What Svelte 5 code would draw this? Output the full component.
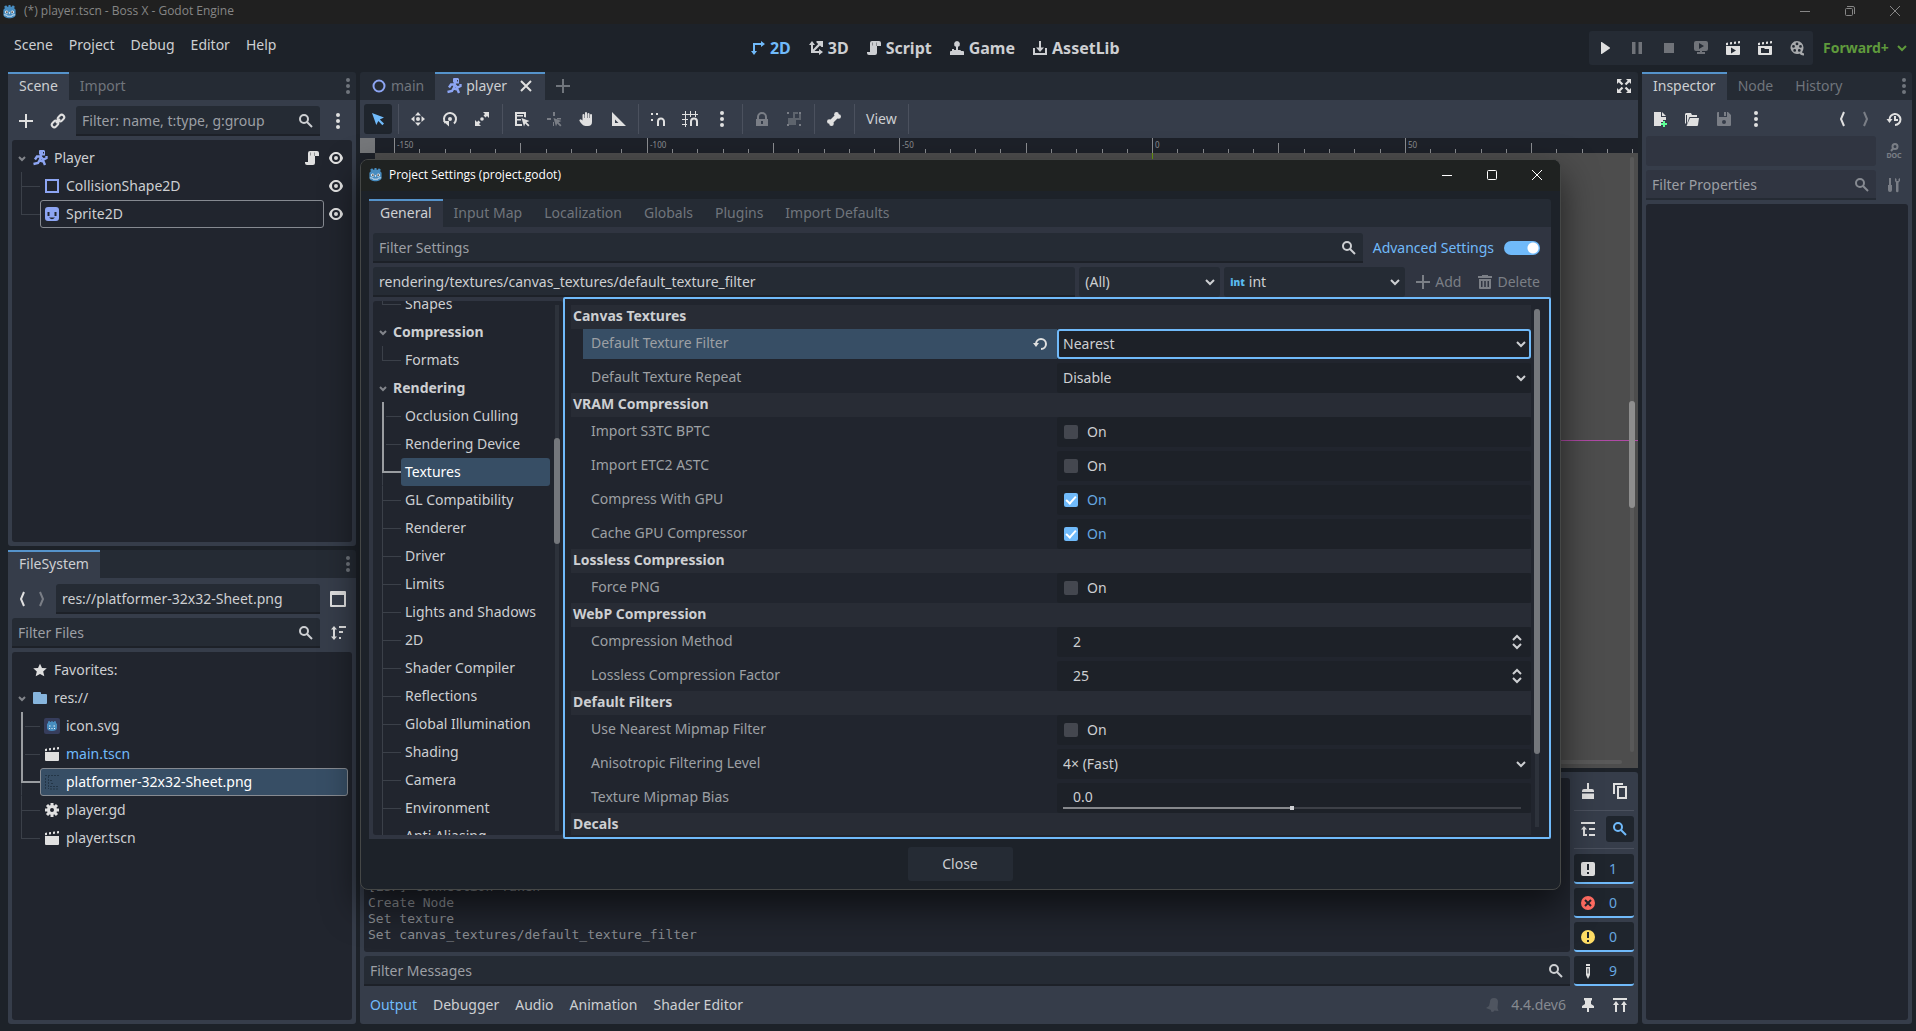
<script>
const icons = {
  godot:
    '<path fill="#478cbf" d="M1.5 6 3 4.6l-.6-1.9 2-1.3 1.3 1.5h1L7 1h2l.3 1.9h1l1.3-1.5 2 1.3-.6 1.9L14.5 6v5.5c0 2.3-3 3.7-6.5 3.7s-6.5-1.4-6.5-3.7z"/><circle fill="#fff" cx="5" cy="8.5" r="1.7"/><circle fill="#fff" cx="11" cy="8.5" r="1.7"/><circle fill="#414042" cx="5.2" cy="8.6" r="1"/><circle fill="#414042" cx="10.8" cy="8.6" r="1"/><path fill="none" stroke="#d5e4f2" d="M8 8.5v2M2 11.5l3 .3.5 1.2h5l.5-1.2 3-.3"/>',
  add: '<path d="M7 1v6H1v2h6v6h2V9h6V7H9V1z"/>',
  close: '<path fill="none" stroke="currentColor" stroke-width="2" d="m3 3 10 10M13 3 3 13"/>',
  link: '<g fill="none" stroke="currentColor" stroke-width="2"><rect x="7.5" y="2.5" width="7" height="5" rx="2.5" transform="rotate(-45 11 5)"/><rect x="1.5" y="8.5" width="7" height="5" rx="2.5" transform="rotate(-45 5 11)"/><path d="m6 10 4-4"/></g>',
  search: '<g fill="none" stroke="currentColor" stroke-width="2"><circle cx="6" cy="6" r="4"/><path d="m9 9 5 5"/></g>',
  dots: '<circle cx="8" cy="2" r="2"/><circle cx="8" cy="8" r="2"/><circle cx="8" cy="14" r="2"/>',
  body: '<path fill-rule="evenodd" d="M7.5 0H12l1 1v4.5H8.5L7 4V1zM11 2v1.5h1V2z"/><path fill="none" stroke="currentColor" stroke-width="2.4" d="M9 5 8 10M8.5 6.5H5L3 9.5M9 7l2.5 2.500 3-1.500V6M8 9.500 6 13l-4.500 1M8 10.500l3.500 1L13 15"/>',
  circle: '<circle fill="none" stroke="currentColor" stroke-width="2" cx="8" cy="8" r="5.5"/>',
  square: '<path fill="none" stroke="currentColor" stroke-width="2" d="M2 2h12v12H2z"/>',
  sprite: '<path fill-rule="evenodd" d="M4 1h8a3 3 0 0 1 3 3v8a3 3 0 0 1-3 3H4a3 3 0 0 1-3-3V4a3 3 0 0 1 3-3zm-.5 5v4h2V6zm7 0v4h2V6zM5 11.500q3 3.500 6 0z"/>',
  script: '<path d="M6 1a2 2 0 0 0-2 2v9H1v1a2 2 0 0 0 2 2h6a2 2 0 0 0 2-2V6h4V3a2 2 0 0 0-2-2z"/><path fill="none" stroke="#1d2229" stroke-opacity=".4" d="M6.500 2.500v3M10.500 6V2.500"/>',
  eye: '<path d="M8 2C5.443 2 2.209 3.948 1.045 7.705a1 1 0 0 0-.01.567C2.163 12.211 5.5 14 8 14s5.836-1.789 6.965-5.728a1 1 0 0 0 0-.552C13.862 3.966 10.57 2 8 2zm0 2a4 4 0 0 1 0 8 4 4 0 0 1 0-8zm0 2a2 2 0 0 0 0 4 2 2 0 0 0 0-4z"/>',
  down: '<path fill="none" stroke="currentColor" stroke-width="2" d="m4 6 4 4 4-4"/>',
  fold: '<path fill="none" stroke="currentColor" stroke-width="2" d="m5 7 3 3 3-3"/>',
  updown: '<path fill="none" stroke="currentColor" stroke-width="2" d="m4 6 4-4 4 4M4 10l4 4 4-4"/>',
  back: '<path fill="none" stroke="currentColor" stroke-width="2" d="M10 1 7 8l3 7"/>',
  forward: '<path fill="none" stroke="currentColor" stroke-width="2" d="m6 1 3 7-3 7"/>',
  window: '<path fill-rule="evenodd" d="M0 1a1 1 0 0 1 1-1h14a1 1 0 0 1 1 1v14a1 1 0 0 1-1 1H1a1 1 0 0 1-1-1zm2 3v10h12V4z"/>',
  sort: '<path d="m4 1 3 3.5H5v7h2L4 15l-3-3.5h2v-7H1zM9 1h7v2H9zm0 5h4v2H9zm0 6h2v2H9z"/>',
  star: '<path d="M8 1.7 6 6l-4.8.2 3.6 3.4-1.1 4.6L8 11.9l4.3 2.3-1.1-4.6 3.6-3.4L10 6z"/>',
  folder: '<path d="M2 2a1 1 0 0 0-1 1v10a1 1 0 0 0 1 1h12a1 1 0 0 0 1-1V5a1 1 0 0 0-1-1H9V3a1 1 0 0 0-1-1z"/>',
  iconsvg: '<rect width="16" height="16" rx="2" fill="#363d5c"/><path fill="#478cbf" d="m3 6 1-1V3.5L5.500 3l.8 1h.9l.3-1h1l.3 1h.9l.8-1 1.500.5V5l1 1v4c0 2-2.200 3-5 3s-5-1-5-3z"/><path stroke="#e8f1fa" fill="none" d="M5 8h1.500M9.500 8H11M5 10.500h1m1.500 0h1m1.500 0h1"/>',
  scene: '<path d="M1 6h14v8a1 1 0 0 1-1 1H2a1 1 0 0 1-1-1zM1 3l2-.4V5l-2 .3zm4-.7 2-.3v2.3l-2 .3zm4-.6 2-.2v2.3l-2 .3zm4-.4 2-.3v2.3l-2 .3z"/>',
  sheet: '<path stroke="#243647" fill="none" stroke-dasharray="2 1" d="M1 1.5h14M1.500 4v11M4.500 2v13M6 6.500h3M7 9.500h2M6 12.500h9M6 15h8"/>',
  gear: '<circle fill="none" stroke="currentColor" stroke-width="3" cx="8" cy="8" r="3.5"/><path fill="none" stroke="currentColor" stroke-width="3" d="M8 1v3M8 12v3M1 8h3M12 8h3M3 3l2.200 2.200M10.800 10.800 13 13M13 3l-2.200 2.200M5.200 10.800 3 13"/>',
  axes2d: '<path d="M3 3h8V1l4 3-4 3V5H5v6h2l-3 4-3-4h2z"/>',
  axes3d: '<path d="m4 1 3 4H5v4.6L10.200 4 8.500 2.500V1H15v6h-1.500L12 5.500 6.500 11H11V9l4 3-4 3v-2H3V5H1z"/>',
  joystick: '<path d="M8 1a3 3 0 0 1 1 5.800V10h2a1 1 0 0 1 1 1h2a1 1 0 0 1 1 1v3H1v-3a1 1 0 0 1 1-1h1V9h2v1h2V6.800A3 3 0 0 1 8 1z"/>',
  download: '<path d="M7 1h2v6.500h3L8 12 4 7.500h3zM1 8h2v5h10V8h2v7H1z"/>',
  play: '<path d="M4 2.500v11a.5.5 0 0 0 .8.4l8-5.500a.5.5 0 0 0 0-.8l-8-5.500a.5.5 0 0 0-.8.4z"/>',
  pause: '<path d="M3 2h3.500v12H3zm6.500 0H13v12H9.500z"/>',
  stop: '<path d="M3 3h10v10H3z"/>',
  remote: '<path fill-rule="evenodd" d="M3 1h10a2 2 0 0 1 2 2v6a2 2 0 0 1-2 2H9v1h3v2H4v-2h3v-1H3a2 2 0 0 1-2-2V3a2 2 0 0 1 2-2zm3 2v6l5-3z"/>',
  playScene: '<path fill-rule="evenodd" d="M1 6h14v8a1 1 0 0 1-1 1H2a1 1 0 0 1-1-1zm5 1.500v6l5-3zM1 3l2-.4V5l-2 .3zm4-.7 2-.3v2.300l-2 .3zm4-.6 2-.2v2.300l-2 .3zm4-.4 2-.3v2.300l-2 .3z"/>',
  playCustom: '<path fill-rule="evenodd" d="M1 6h14v8a1 1 0 0 1-1 1H2a1 1 0 0 1-1-1zm3 2v5h8V9H8L7 8zM1 3l2-.4V5l-2 .3zm4-.7 2-.3v2.300l-2 .3zm4-.6 2-.2v2.300l-2 .3zm4-.4 2-.3v2.300l-2 .3z"/>',
  movie: '<path fill-rule="evenodd" d="M8 1a6.500 6.500 0 0 1 6.500 6.500c0 3-1.500 4-1.500 5l2 1v2c-3 0-4-1.500-4.500-2A6.500 6.500 0 1 1 8 1zm0 1.500a1.400 1.400 0 0 0 0 2.800 1.400 1.400 0 0 0 0-2.800zM4.500 5a1.400 1.400 0 0 0 0 2.800A1.400 1.400 0 0 0 4.500 5zm7 0a1.400 1.400 0 0 0 0 2.800 1.400 1.400 0 0 0 0-2.800zM5.700 9a1.400 1.400 0 0 0 0 2.800 1.400 1.400 0 0 0 0-2.800zm4.600 0a1.400 1.400 0 0 0 0 2.800 1.400 1.400 0 0 0 0-2.800z"/>',
  expand: '<path d="M1 1h5L4.300 2.700l3 3-1.600 1.600-3-3L1 6zM15 1v5l-1.700-1.700-3 3-1.600-1.600 3-3L10 1zM1 15v-5l1.700 1.700 3-3 1.600 1.600-3 3L6 15zM15 15h-5l1.700-1.700-3-3 1.600-1.600 3 3L15 10z"/>',
  select: '<path d="m2 2 12 4.500-4.200 2 4.200 4.100-1.600 1.600-4.100-4.200-2 4z"/>',
  move: '<path d="M8 1 5 4.500h6zM8 15l-3-3.500h6zM1 8l3.500-3v6zM15 8l-3.500-3v6z"/><circle cx="8" cy="8" r="2"/>',
  rotate: '<path fill="none" stroke="currentColor" stroke-width="2" d="M3.500 12A6 6 0 1 1 12 12.500"/><path d="M1 10h6v5.500z"/><circle cx="8" cy="8" r="2"/>',
  scale: '<path d="M9 1h6v6l-2-2-1.500 1.500-2-2L11 3zM7 15H1V9l2 2 1.500-1.500 2 2L5 13z"/><circle cx="8" cy="8" r="1.800"/>',
  listSelect: '<path d="M1 1h11v5.500L10 6V3H3v1h6v1.500H3V8h4v1.500H3V13h5v2H1z"/><path d="m7.500 7 8 3-3 1.200 3 3-1.300 1.300-3-3L10 15.500z"/>',
  pivot: '<path d="M7 1h2v4H7zM1 7h4v2H1zm10 0h4v1.500h-4zM7 11v4h1v-4z"/><path d="m7.500 7 8 3-3 1.200 3 3-1.300 1.300-3-3L10 15.500z"/>',
  pan: '<path d="M7 2a1 1 0 0 1 2 0v5h.5V3a1 1 0 0 1 2 0v4h.5V4a1 1 0 0 1 2 0v7a4 4 0 0 1-4 4H7.500C5 15 3 12 1.500 10a1.200 1.200 0 0 1 2-1.300L4.500 9.500V4a1 1 0 0 1 2 0v3H7z"/>',
  ruler: '<path fill-rule="evenodd" d="M2 1v14h14zm3 7.500L8.500 12H5z"/>',
  smartSnap: '<path d="M1 2h2v2H1zm5 0h2v2H6zM1 8h2v2H1z"/><path fill="none" stroke="currentColor" stroke-width="2" d="M8 15v-4.500a3 3 0 0 1 6 0V15"/>',
  gridSnap: '<path d="M3 0h1v16H3zM8 0h1v6H8zM13 0h1v6h-1zM0 3h16v1H0zM0 8h6v1H0zM0 13h5v1H0z"/><path fill="none" stroke="currentColor" stroke-width="2" d="M9 15v-4.500a3 3 0 0 1 6 0V15"/>',
  lock: '<path fill-rule="evenodd" d="M8 1a5 5 0 0 0-5 5v2H2v7h12V8h-1V6a5 5 0 0 0-5-5zm0 2a3 3 0 0 1 3 3v2H5V6a3 3 0 0 1 3-3zM7 10h2v3H7z"/>',
  group: '<path d="M1 1h2v2H1zm12 0h2v2h-2zM1 13h2v2H1zm12 0h2v2h-2z"/><path opacity=".6" fill-rule="evenodd" d="M7 1h5v2h3v6h-5v5H2V7h5zm2 2v4h4V3z"/>',
  bone: '<path fill="none" stroke="currentColor" stroke-width="4" d="m5 11 6-6"/><circle cx="10.500" cy="3.300" r="2.300"/><circle cx="12.700" cy="5.500" r="2.300"/><circle cx="3.300" cy="10.500" r="2.300"/><circle cx="5.500" cy="12.700" r="2.300"/>',
  fileNew: '<path d="M2 1v14h7v-4h2V9h3V6H9V1zm8 0v4h4z"/><path fill="#5fff97" d="M11 10h2v2h2v2h-2v2h-2v-2H9v-2h2z"/>',
  open: '<path fill-rule="evenodd" d="M2 2h5l1 2h5v2H6a1 1 0 0 0-1 1L3 13V4H2v9L1 12V3zM6 7h9l-1 7a1 1 0 0 1-1 1H2.500z"/>',
  save: '<path fill-rule="evenodd" d="M1 2a1 1 0 0 1 1-1h1v5h8V1h1l3 3v10a1 1 0 0 1-1 1H2a1 1 0 0 1-1-1zm7 7a2 2 0 0 0 0 4 2 2 0 0 0 0-4zM8 1h2v4H8z"/>',
  history: '<path fill="none" stroke="currentColor" stroke-width="2" d="M3.500 9a5.500 5.500 0 1 1 5.500 5M9 5v4h3"/><path d="M.5 8h6l-3 4z"/>',
  doc: '<circle fill="none" stroke="currentColor" stroke-width="2" cx="9" cy="3.500" r="2.500"/><path stroke="currentColor" stroke-width="2" d="M7.500 5 5 8"/><text x="8" y="15" font-size="7" font-weight="700" text-anchor="middle">DOC</text>',
  tools: '<path d="M3 1h2v7h1v5a2 2 0 0 1-4 0V8h1zM9 1v3l1 1.500V14a1 1 0 0 0 2.500 0V5.500L14 4V1l-1.500 1v2h-2V2z"/>',
  revert: '<path fill="none" stroke="currentColor" stroke-width="2" d="M4 9a5 5 0 1 1 5 5"/><path d="M1 8h6l-3 4z"/>',
  trash: '<path fill-rule="evenodd" d="M5 1h6v1h4v2H1V2h4zM2 5h12v9a1 1 0 0 1-1 1H3a1 1 0 0 1-1-1zm2 2v6h1.500V7zm3.200 0v6h1.600V7zm3.300 0v6H12V7z"/>',
  broom: '<path d="M7 0h2v6h3a2 2 0 0 1 2 2v1H2V8a2 2 0 0 1 2-2h3zM2 10.500h12V16H2z"/>',
  copy: '<path d="M1 0h10v2H3v9H1z"/><path fill="none" stroke="currentColor" stroke-width="2" d="M6 4h8v11H6z"/>',
  collapse: '<path d="M1 1h14v2H1zm8 6h6v2H9zm0 6h6v2H9zM4 5l3 3.500H5V13h2v2H3V8.500H1z"/>',
  message: '<path fill-rule="evenodd" d="M3 1h10a2 2 0 0 1 2 2v10a2 2 0 0 1-2 2H3a2 2 0 0 1-2-2V3a2 2 0 0 1 2-2zm4 2v6h2V3zm0 8v2h2v-2z"/>',
  error: '<circle fill="#ff6b61" cx="8" cy="8" r="7"/><path fill="none" stroke="#1f252d" stroke-width="2" d="m5 5 6 6M11 5l-6 6"/>',
  warning: '<circle fill="#ffdd65" cx="8" cy="8" r="7"/><path fill="#1f252d" d="M7 3h2v6H7zm0 8h2v2H7z"/>',
  pen: '<path fill-rule="evenodd" d="M6 1h4v2H6zm0 3h4v8l-2 4-2-4zm1.500 1.500v5h1v-5z"/>',
  bell: '<path d="M9 1a4 4 0 0 1 4 4l-.5 6 1 3-4-.5L8 15l-2-.5V13l-5-2 3-2 1-4a4 4 0 0 1 4-4z"/>',
  pin: '<path d="M4 1h8v2l-1 1v3l3 2v2H9v4H7v-4H2V9l3-2V4L4 3z"/>',
  raise: '<path d="M1 1h14v2H1zm3 3 3 4H5v7H3V8H1zm8 0 3 4h-2v7h-2V8H9z"/>',
  min: '<path fill="none" stroke="currentColor" d="M3 8.500h10"/>',
  max: '<rect fill="none" stroke="currentColor" x="3.500" y="3.500" width="9" height="9" rx="1"/>',
  restore: '<path fill="none" stroke="currentColor" d="M5 3.500h6a1.500 1.500 0 0 1 1.500 1.500v6"/><rect fill="none" stroke="currentColor" x="3.500" y="5.500" width="7" height="7" rx="1"/>',
  quit: '<path fill="none" stroke="currentColor" d="m3 3 10 10M13 3 3 13"/>'
}

const menus = ['Scene', 'Project', 'Debug', 'Editor', 'Help']

const screens = [
  { name: '2D', icon: 'axes2d' },
  { name: '3D', icon: 'axes3d' },
  { name: 'Script', icon: 'script' },
  { name: 'Game', icon: 'joystick' },
  { name: 'AssetLib', icon: 'download' }
]

const runButtons = [
  { icon: 'play' },
  { icon: 'pause', dim: true },
  { icon: 'stop', dim: true },
  { icon: 'remote', dim: true },
  { icon: 'playScene' },
  { icon: 'playCustom' },
  { icon: 'movie', soft: true }
]

// null is a separator
const canvasTools = [
  { icon: 'select', active: true },
  null,
  { icon: 'move' },
  { icon: 'rotate' },
  { icon: 'scale' },
  null,
  { icon: 'listSelect' },
  { icon: 'pivot', dim: true },
  { icon: 'pan' },
  { icon: 'ruler' },
  null,
  { icon: 'smartSnap' },
  { icon: 'gridSnap' },
  { icon: 'dots' },
  null,
  { icon: 'lock', dim: true },
  { icon: 'group', dim: true },
  null,
  { icon: 'bone' },
  null
]

const files = [
  { name: 'icon.svg', icon: 'iconsvg' },
  { name: 'main.tscn', icon: 'scene', open: true },
  { name: 'platformer-32x32-Sheet.png', icon: 'sheet' },
  { name: 'player.gd', icon: 'gear' },
  { name: 'player.tscn', icon: 'scene' }
]
const selectedFile = 2

const categories = [
  'Occlusion Culling',
  'Rendering Device',
  'Textures',
  'GL Compatibility',
  'Renderer',
  'Driver',
  'Limits',
  'Lights and Shadows',
  '2D',
  'Shader Compiler',
  'Reflections',
  'Global Illumination',
  'Shading',
  'Camera',
  'Environment',
  'Anti Aliasing'
]
const selectedCategory = 2

const sections = [
  {
    title: 'Canvas Textures',
    props: [
      { name: 'Default Texture Filter', type: 'enum', value: 'Nearest', changed: true },
      { name: 'Default Texture Repeat', type: 'enum', value: 'Disable' }
    ]
  },
  {
    title: 'VRAM Compression',
    props: [
      { name: 'Import S3TC BPTC', type: 'bool', value: false },
      { name: 'Import ETC2 ASTC', type: 'bool', value: false },
      { name: 'Compress With GPU', type: 'bool', value: true },
      { name: 'Cache GPU Compressor', type: 'bool', value: true }
    ]
  },
  { title: 'Lossless Compression', props: [{ name: 'Force PNG', type: 'bool', value: false }] },
  {
    title: 'WebP Compression',
    props: [
      { name: 'Compression Method', type: 'int', value: '2' },
      { name: 'Lossless Compression Factor', type: 'int', value: '25' }
    ]
  },
  {
    title: 'Default Filters',
    props: [
      { name: 'Use Nearest Mipmap Filter', type: 'bool', value: false },
      { name: 'Anisotropic Filtering Level', type: 'enum', value: '4× (Fast)' },
      { name: 'Texture Mipmap Bias', type: 'range', value: '0.0' }
    ]
  },
  { title: 'Decals', props: [] }
]

const log = ['[LSP] Connection Taken', 'Create Node', 'Set texture', 'Set canvas_textures/default_texture_filter']

const counters = [
  { icon: 'message', count: 1 },
  { icon: 'error', count: 0 },
  { icon: 'warning', count: 0 },
  { icon: 'pen', count: 9 }
]

const bottomTabs = ['Output', 'Debugger', 'Audio', 'Animation', 'Shader Editor']

// one tick every 5 canvas units, starting at -150
const ticks = Array.from({ length: 50 }, (_, i) => ({
  x: 19 + Math.round(i * 25.27),
  height: i % 10 === 0 ? 15 : i % 5 === 0 ? 10 : 4,
  label: i % 10 === 0 ? String(-150 + i * 5) : ''
}))

function guideClass(i, selected, length) {
  if (i < selected) return 'lit'
  if (i === selected) return 'lit end'
  return i === length - 1 ? 'end' : ''
}
</script>

{#snippet icon(name)}
  <svg class="icon" viewBox="0 0 16 16" aria-hidden="true">{@html icons[name]}</svg>
{/snippet}

{#snippet tool(name, label, cls = '')}
  <button class="tool {cls}" aria-label={label}>{@render icon(name)}</button>
{/snippet}

<div class="editor">
  <header class="os-bar">
    {@render icon('godot')}
    <span>(*) player.tscn - Boss X - Godot Engine</span>
    <div class="os-buttons">
      <button aria-label="Minimize">{@render icon('min')}</button>
      <button aria-label="Restore">{@render icon('restore')}</button>
      <button aria-label="Close window">{@render icon('quit')}</button>
    </div>
  </header>

  <div class="main-bar">
    <nav class="menus">
      {#each menus as menu}
        <button>{menu}</button>
      {/each}
    </nav>
    <nav class="screens">
      {#each screens as screen, i}
        <button class:active={i === 0}>{@render icon(screen.icon)}{screen.name}</button>
      {/each}
    </nav>
    <div class="run">
      <div class="run-bar">
        {#each runButtons as button}
          {@render tool(button.icon, button.icon, button.dim ? 'dim' : button.soft ? 'soft' : '')}
        {/each}
      </div>
      <div class="select renderer">
        <select aria-label="Renderer"><option>Forward+</option></select>
        {@render icon('down')}
      </div>
    </div>
  </div>

  <div class="workspace">
    <div class="docks">
      <section class="dock">
        <div class="tabs">
          <button class="tab active">Scene</button>
          <button class="tab">Import</button>
          <button class="tab-menu" aria-label="Dock menu">{@render icon('dots')}</button>
        </div>
        <div class="dock-body">
          <div class="row">
            {@render tool('add', 'Add node')}
            {@render tool('link', 'Instantiate scene')}
            <div class="field">
              <input type="text" aria-label="Filter nodes" placeholder="Filter: name, t:type, g:group" />
              {@render icon('search')}
            </div>
            {@render tool('dots', 'Scene options')}
          </div>
          <div class="tree">
            <div class="item root">
              <span class="arrow">{@render icon('fold')}</span>
              <div class="box"><span class="node">{@render icon('body')}</span>Player</div>
              <div class="marks">{@render icon('script')}{@render icon('eye')}</div>
            </div>
            <div class="item">
              <span class="guide"></span>
              <div class="box"><span class="node">{@render icon('square')}</span>CollisionShape2D</div>
              <div class="marks">{@render icon('eye')}</div>
            </div>
            <div class="item">
              <span class="guide end"></span>
              <div class="box focused"><span class="node">{@render icon('sprite')}</span>Sprite2D</div>
              <div class="marks">{@render icon('eye')}</div>
            </div>
          </div>
        </div>
      </section>

      <section class="dock">
        <div class="tabs">
          <button class="tab active">FileSystem</button>
          <button class="tab-menu" aria-label="Dock menu">{@render icon('dots')}</button>
        </div>
        <div class="dock-body">
          <div class="row">
            <div class="history">
              {@render tool('back', 'Previous folder', 'narrow')}
              {@render tool('forward', 'Next folder', 'narrow dim')}
            </div>
            <div class="field">
              <input type="text" aria-label="Path" value="res://platformer-32x32-Sheet.png" />
            </div>
            {@render tool('window', 'Change split mode')}
          </div>
          <div class="row">
            <div class="field">
              <input type="text" aria-label="Filter files" placeholder="Filter Files" />
              {@render icon('search')}
            </div>
            {@render tool('sort', 'Sort files')}
          </div>
          <div class="tree">
            <div class="item root">
              <span class="arrow"></span>
              <div class="box">{@render icon('star')}Favorites:</div>
            </div>
            <div class="item root">
              <span class="arrow">{@render icon('fold')}</span>
              <div class="box"><span class="folder">{@render icon('folder')}</span>res://</div>
            </div>
            {#each files as file, i}
              <div class="item">
                <span class="guide {guideClass(i, selectedFile, files.length)}"></span>
                <div class="box" class:focused={i === selectedFile} class:selected={i === selectedFile} class:open={file.open}>
                  {@render icon(file.icon)}<span>{file.name}</span>
                </div>
              </div>
            {/each}
          </div>
        </div>
      </section>
    </div>

    <main class="center">
      <section class="viewport">
        <div class="tabs">
          <button class="tab"><span class="node">{@render icon('circle')}</span>main</button>
          <button class="tab active"><span class="node">{@render icon('body')}</span>player <span class="tab-close">{@render icon('close')}</span></button>
          <button class="tab-menu new" aria-label="New scene">{@render icon('add')}</button>
          <button class="tab-menu bright" aria-label="Distraction free mode">{@render icon('expand')}</button>
        </div>
        <div class="toolbar">
          {#each canvasTools as t}
            {#if t}
              {@render tool(t.icon, t.icon, t.active ? 'active' : t.dim ? 'dim' : '')}
            {:else}
              <span class="sep"></span>
            {/if}
          {/each}
          <button class="view">View</button>
          <span class="sep"></span>
        </div>
        <div class="ruler">
          <span class="corner"></span>
          <svg height="15">
            {#each ticks as tick}
              <rect x={tick.x} y={15 - tick.height} width="1" height={tick.height} />
              <text x={tick.x + 3} y="10">{tick.label}</text>
            {/each}
          </svg>
        </div>
        <div class="canvas">
          <span class="axis-y"></span>
          <span class="axis-x"></span>
          <span class="v-scroll"><span></span></span>
          <span class="h-scroll"></span>
        </div>
      </section>

      <section class="bottom">
        <div class="output">
          <div class="output-main">
            <div class="log">
              {#each log as line}
                <div>{line}</div>
              {/each}
            </div>
            <div class="row">
              <div class="field">
                <input type="text" aria-label="Filter messages" placeholder="Filter Messages" />
                {@render icon('search')}
              </div>
            </div>
          </div>
          <div class="output-side">
            <div class="pair">
              {@render tool('broom', 'Clear output')}
              {@render tool('copy', 'Copy selection')}
            </div>
            <span class="hsep"></span>
            <div class="pair">
              {@render tool('collapse', 'Collapse duplicates')}
              {@render tool('search', 'Focus search', 'active')}
            </div>
            <span class="hsep"></span>
            {#each counters as counter}
              <button class="counter">{@render icon(counter.icon)}<span>{counter.count}</span></button>
            {/each}
          </div>
        </div>
        <div class="bottom-tabs">
          {#each bottomTabs as tab, i}
            <button class="bottom-tab" class:active={i === 0}>{tab}</button>
          {/each}
          <span class="bell">{@render icon('bell')}</span>
          <span class="version">4.4.dev6</span>
          {@render tool('pin', 'Pin bottom panel')}
          {@render tool('raise', 'Expand bottom panel')}
        </div>
      </section>
    </main>

    <aside class="inspector">
      <section class="dock">
        <div class="tabs">
          <button class="tab active">Inspector</button>
          <button class="tab">Node</button>
          <button class="tab">History</button>
          <button class="tab-menu" aria-label="Dock menu">{@render icon('dots')}</button>
        </div>
        <div class="dock-body">
          <div class="row short">
            {@render tool('fileNew', 'New resource')}
            {@render tool('open', 'Load resource')}
            {@render tool('save', 'Save resource', 'dim')}
            {@render tool('dots', 'Resource options')}
            <span class="spacer"></span>
            {@render tool('back', 'Previous object', 'narrow')}
            {@render tool('forward', 'Next object', 'narrow dim')}
            {@render tool('history', 'Edit history')}
          </div>
          <div class="row">
            <button class="object" aria-label="Edited object"></button>
            {@render tool('doc', 'Open documentation', 'dim')}
          </div>
          <div class="row">
            <div class="field flat">
              <input type="text" aria-label="Filter properties" placeholder="Filter Properties" />
              {@render icon('search')}
            </div>
            {@render tool('tools', 'Manage properties', 'dim')}
          </div>
          <div class="tree"></div>
        </div>
      </section>
    </aside>
  </div>

  <div class="dialog" role="dialog" aria-label="Project Settings">
    <header class="dialog-title">
      {@render icon('godot')}
      <span>Project Settings (project.godot)</span>
      <div class="os-buttons">
        <button aria-label="Minimize">{@render icon('min')}</button>
        <button aria-label="Maximize">{@render icon('max')}</button>
        <button aria-label="Close dialog">{@render icon('quit')}</button>
      </div>
    </header>
    <div class="dialog-body">
      <div class="tabs">
        <button class="tab active">General</button>
        <button class="tab">Input Map</button>
        <button class="tab">Localization</button>
        <button class="tab">Globals</button>
        <button class="tab">Plugins</button>
        <button class="tab">Import Defaults</button>
      </div>
      <div class="settings">
        <div class="settings-rows">
          <div class="row">
            <div class="field">
              <input type="text" aria-label="Filter settings" placeholder="Filter Settings" />
              {@render icon('search')}
            </div>
            <label class="advanced">
              Advanced Settings
              <input type="checkbox" checked />
            </label>
          </div>
          <div class="row">
            <div class="field">
              <input type="text" aria-label="Setting path" value="rendering/textures/canvas_textures/default_texture_filter" />
            </div>
            <div class="select feature">
              <select aria-label="Feature"><option>(All)</option></select>
              {@render icon('down')}
            </div>
            <div class="select type">
              <span class="int">int</span>
              <select aria-label="Type"><option>int</option></select>
              {@render icon('down')}
            </div>
            <button class="action" disabled>{@render icon('add')}Add</button>
            <button class="action" disabled>{@render icon('trash')}Delete</button>
          </div>
        </div>
        <div class="split">
          <div class="categories">
            <div class="category-list">
              <div class="item"><span class="guide end"></span><div class="box">Shapes</div></div>
              <div class="item root"><span class="arrow">{@render icon('fold')}</span><div class="box"><b>Compression</b></div></div>
              <div class="item"><span class="guide end"></span><div class="box">Formats</div></div>
              <div class="item root"><span class="arrow">{@render icon('fold')}</span><div class="box"><b>Rendering</b></div></div>
              {#each categories as category, i}
                <div class="item">
                  <span class="guide {guideClass(i, selectedCategory, 99)}"></span>
                  <div class="box" class:selected={i === selectedCategory}>{category}</div>
                </div>
              {/each}
            </div>
            <div class="scroll tree-scroll"><span></span></div>
          </div>
          <div class="properties">
            <div class="property-list">
              {#each sections as section}
                <h3>{section.title}</h3>
                <div class="props">
                  {#each section.props as prop}
                    {@const id = prop.name.toLowerCase().replaceAll(' ', '-')}
                    <div class="prop" class:changed={prop.changed}>
                      <div class="name">
                        <label for={id}>{prop.name}</label>
                        {#if prop.changed}
                          <button class="revert" aria-label="Revert">{@render icon('revert')}</button>
                        {/if}
                      </div>
                      {#if prop.type === 'enum'}
                        <div class="value select">
                          <select {id}><option>{prop.value}</option></select>
                          {@render icon('down')}
                        </div>
                      {:else if prop.type === 'bool'}
                        <label class="value check">
                          <input {id} type="checkbox" checked={prop.value} />
                          <span>On</span>
                        </label>
                      {:else if prop.type === 'int'}
                        <div class="value spin">
                          <input {id} type="text" value={prop.value} />
                          {@render icon('updown')}
                        </div>
                      {:else}
                        <div class="value slider">
                          <input {id} type="text" value={prop.value} />
                          <input type="range" min="-2" max="2" value="0" aria-label={prop.name} />
                        </div>
                      {/if}
                    </div>
                  {/each}
                </div>
              {/each}
            </div>
            <div class="scroll prop-scroll"><span></span></div>
          </div>
        </div>
      </div>
      <button class="close">Close</button>
    </div>
  </div>
</div>

<style>
  :global(body) {
    margin: 0;
    background: #1d2229;
  }

  .editor {
    position: relative;
    display: flex;
    flex-direction: column;
    height: 100vh;
    overflow: hidden;
    font: 14px/20px "Noto Sans", "Open Sans", sans-serif;
    color: #cdcfd2;
    background: #1d2229;
  }

  .editor * {
    box-sizing: border-box;
  }

  button,
  input,
  select {
    margin: 0;
    padding: 0;
    border: none;
    outline: none;
    background: none;
    color: inherit;
    font: inherit;
  }

  select {
    appearance: none;
  }

  button {
    display: flex;
    align-items: center;
    white-space: nowrap;
  }

  .icon {
    display: block;
    flex: none;
    width: 16px;
    height: 16px;
    overflow: visible;
    fill: currentColor;
  }

  /* window title bars */
  .os-bar,
  .dialog-title {
    display: flex;
    align-items: center;
    flex: none;
    font: 12px/16px "Open Sans", "Noto Sans", sans-serif;
  }

  .os-bar {
    height: 24px;
    padding: 0 13px 2px 2px;
    gap: 7px;
    background: #202020;
    color: #868686;
  }

  .os-bar > :global(.icon),
  .dialog-title > :global(.icon) {
    width: 15px;
    height: 15px;
  }

  .os-buttons {
    display: flex;
    gap: 29px;
    margin-left: auto;
  }

  /* menu bar */
  .main-bar {
    display: flex;
    justify-content: space-between;
    align-items: center;
    flex: none;
    height: 48px;
    padding: 0 6px;
  }

  .menus {
    display: flex;
    padding-bottom: 6px;
  }

  .menus button {
    padding: 0 8px;
  }

  .screens {
    display: flex;
    gap: 1px;
    margin-right: 4px;
    font-size: 16px;
    font-weight: 700;
  }

  .screens button {
    gap: 4px;
    padding: 0 8px;
  }

  .screens .active {
    color: #70bafa;
  }

  .run {
    display: flex;
    align-items: center;
    gap: 10px;
  }

  .run-bar {
    display: flex;
    gap: 4px;
    padding: 2px;
    border-radius: 3px;
    background: #252b34;
  }

  .renderer {
    gap: 5px;
    color: #5f9a3c;
    font-weight: 700;
  }

  .tool {
    justify-content: center;
    flex: none;
    width: 28px;
    height: 30px;
    border-radius: 3px;
    color: #e0e0e0;
  }

  .tool.narrow {
    width: 20px;
  }

  .tool.dim {
    opacity: 0.4;
  }

  .tool.soft {
    opacity: 0.7;
  }

  .tool.active {
    background: #1f252d;
    color: #70bafa;
  }

  /* docks */
  .workspace {
    display: grid;
    grid-template-columns: 348px minmax(0, 1fr) 270px;
    gap: 4px;
    flex: 1;
    min-height: 0;
    padding: 0 4px 7px 8px;
  }

  .docks,
  .inspector,
  .center {
    display: flex;
    flex-direction: column;
    gap: 4px;
    min-height: 0;
  }

  .dock {
    display: flex;
    flex-direction: column;
    flex: 1;
    min-height: 0;
  }

  .tabs {
    display: flex;
    flex: none;
    height: 28px;
    border-radius: 3px 3px 0 0;
    background: #252b34;
  }

  .tab {
    gap: 4px;
    padding: 0 11px 2px;
    border-top: 2px solid transparent;
    color: #70757c;
  }

  .tab.active {
    border-top-color: #5593cb;
    background: #363d4a;
    color: #cdcfd2;
  }

  .tab-close {
    margin-left: 7px;
    color: #e0e0e0;
  }

  .tab-menu {
    margin-left: auto;
    color: #70757c;
  }

  .tab-menu.new {
    margin: 0 10px;
  }

  .tab-menu.bright {
    padding-right: 6px;
    color: #e0e0e0;
  }

  .dock-body {
    display: flex;
    flex-direction: column;
    gap: 4px;
    flex: 1;
    padding: 6px 4px 4px;
    border-radius: 0 0 3px 3px;
    background: #363d4a;
  }

  .row {
    display: flex;
    gap: 4px;
    height: 30px;
  }

  .row.short {
    align-items: center;
    height: 26px;
  }

  .history {
    display: flex;
  }

  .spacer {
    flex: 1;
  }

  .field {
    display: flex;
    align-items: center;
    flex: 1;
    min-width: 0;
    padding: 2px 6px 0;
    border-bottom: 2px solid #1d2128;
    border-radius: 3px 3px 0 0;
    background: #252b34;
  }

  .field input {
    flex: 1;
    min-width: 0;
  }

  ::placeholder {
    color: #9c9fa4;
    opacity: 1;
  }

  .field.flat {
    border-bottom-color: #252b34;
    background: #303541;
    color: #868a91;
  }

  .object {
    flex: 1;
    border-radius: 3px;
    background: #303541;
  }

  /* trees */
  .tree {
    flex: 1;
    padding: 4px;
    border-radius: 3px;
    background: #21252e;
  }

  .item {
    display: flex;
    align-items: center;
    height: 28px;
    padding-left: 5px;
  }

  .item.root {
    padding-left: 0;
  }

  .marks {
    display: flex;
    gap: 8px;
    padding: 0 4px;
    color: #e0e0e0;
  }

  .box {
    display: flex;
    align-items: center;
    gap: 6px;
    flex: 1;
    height: 28px;
    padding: 0 4px;
    border-radius: 3px;
    white-space: nowrap;
  }

  .guide,
  .arrow {
    flex: none;
  }

  .arrow {
    display: flex;
    justify-content: center;
    width: 12px;
    color: #82858b;
  }

  .guide {
    width: 19px;
    height: 28px;
    background:
      linear-gradient(#3b4049, #3b4049) 0 0 / 1px 100% no-repeat,
      linear-gradient(#3b4049, #3b4049) 0 50% / 100% 1px no-repeat;
  }

  .guide.end {
    background-size: 1px 50%, 100% 1px;
  }

  .guide.lit {
    background:
      linear-gradient(#9a9da1, #9a9da1) 0 0 / 2px 100% no-repeat,
      linear-gradient(#3b4049, #3b4049) 4px 50% / 15px 1px no-repeat;
  }

  .guide.lit.end {
    background:
      linear-gradient(#9a9da1, #9a9da1) 0 0 / 2px 50% no-repeat,
      linear-gradient(#9a9da1, #9a9da1) 0 50% / 100% 2px no-repeat,
      linear-gradient(#3b4049, #3b4049) 0 100% / 1px 45% no-repeat;
  }

  .box.focused {
    padding: 0 3px;
    border: 1px solid #868a91;
  }

  .box.selected {
    background: #374e65;
    color: #fff;
  }

  .box.open span {
    color: #70bafa;
  }

  .box > :global(.icon) {
    color: #e0e0e0;
  }

  .node {
    color: #8da5f3;
  }

  .folder {
    color: #87b5dd;
  }

  /* canvas editor */
  .viewport {
    display: flex;
    flex-direction: column;
    flex: 1;
    min-height: 0;
  }

  .toolbar {
    display: flex;
    gap: 4px;
    flex: none;
    height: 38px;
    padding: 4px;
    background: #363d4a;
  }

  .sep {
    width: 4px;
    background: linear-gradient(#4b515e, #4b515e) 50% 0 / 1px 100% no-repeat;
  }

  .view {
    padding: 0 6px;
  }

  .ruler {
    display: flex;
    flex: none;
    height: 15px;
    background: #1d2129;
  }

  .corner {
    width: 15px;
    background: #75777a;
  }

  .ruler svg {
    flex: 1;
    min-width: 0;
    fill: #8b8d91;
    font-size: 8px;
  }

  .canvas {
    position: relative;
    flex: 1;
    border-left: 15px solid #1d2129;
    background: #4d4d4d;
  }

  .axis-y {
    position: absolute;
    top: 0;
    bottom: 0;
    left: 777px;
    width: 1px;
    background: #6a9a10;
  }

  .axis-x {
    position: absolute;
    top: 287px;
    left: 0;
    right: 0;
    height: 1px;
    background: #b04aa6;
  }

  .v-scroll {
    position: absolute;
    top: 4px;
    right: 4px;
    bottom: 16px;
    width: 4px;
    border-radius: 2px;
    background: #595959;
  }

  .v-scroll span {
    position: absolute;
    top: 41%;
    left: -1px;
    width: 6px;
    height: 18%;
    border-radius: 3px;
    background: #8e8e8e;
  }

  .h-scroll {
    position: absolute;
    left: 4px;
    right: 16px;
    bottom: 4px;
    height: 4px;
    border-radius: 2px;
    background: #595959;
  }

  /* bottom panel */
  .bottom {
    flex: none;
    padding: 6px 4px 0;
    border-radius: 3px;
    background: #363d4a;
  }

  .output {
    display: flex;
    gap: 4px;
  }

  .output-main {
    display: flex;
    flex-direction: column;
    gap: 4px;
    flex: 1;
    min-width: 0;
  }

  .log {
    display: flex;
    flex-direction: column;
    justify-content: flex-end;
    flex: 1;
    padding: 0 4px 9px;
    border-radius: 3px;
    background: #21252e;
    color: #8a8d92;
    font: 13px/16px "DejaVu Sans Mono", "Liberation Mono", monospace;
  }

  .output-side {
    display: flex;
    flex-direction: column;
    gap: 4px;
    width: 60px;
  }

  .pair {
    display: flex;
    gap: 4px;
    height: 26px;
  }

  .pair :global(.tool) {
    height: 26px;
  }

  .hsep {
    height: 4px;
    background: linear-gradient(#4b515e, #4b515e) 0 50% / 100% 1px no-repeat;
  }

  .counter {
    height: 30px;
    padding: 2px 6px 0;
    border-bottom: 2px solid #70bafa;
    border-radius: 3px;
    background: #1f252d;
    color: #e0e0e0;
  }

  .counter span {
    flex: 1;
    padding-left: 2px;
    color: #66a7e0;
  }

  .bottom-tabs {
    display: flex;
    align-items: center;
    height: 38px;
  }

  .bottom-tab {
    padding: 0 8px;
  }

  .bottom-tab:first-child {
    margin-left: -2px;
  }

  .bottom-tab.active {
    color: #70bafa;
  }

  .bell {
    margin-left: auto;
    color: #4f5560;
  }

  .version {
    margin: 0 8px 0 10px;
    color: #868a91;
  }

  .bottom-tabs :global(.tool:last-child) {
    margin-left: 4px;
  }

  /* project settings window */
  .dialog {
    position: absolute;
    top: 159px;
    right: 355px;
    bottom: 141px;
    left: 360px;
    display: flex;
    flex-direction: column;
    overflow: hidden;
    border: 1px solid #454746;
    border-radius: 8px;
    background: #1d2229;
    box-shadow: 0 16px 36px rgba(0, 0, 0, 0.6);
  }

  .dialog-title {
    height: 31px;
    gap: 6px;
    padding: 0 15px 2px 7px;
    background: #1f2221;
    color: #fff;
  }

  .dialog-body {
    display: flex;
    flex-direction: column;
    flex: 1;
    min-height: 0;
    padding: 8px 9px 8px 8px;
  }

  .dialog .tab.active {
    background: #303541;
  }

  .settings {
    display: flex;
    flex-direction: column;
    flex: 1;
    min-height: 0;
    background: #303541;
  }

  .settings-rows {
    display: flex;
    flex-direction: column;
    gap: 4px;
    padding: 6px 5px 0 4px;
  }

  .advanced {
    display: flex;
    align-items: center;
    gap: 10px;
    padding: 0 6px;
    color: #70bafa;
  }

  .advanced input {
    appearance: none;
    width: 36px;
    height: 14px;
    border-radius: 7px;
    background: radial-gradient(circle at 29px 7px, #fff 5px, #70bafa 6px);
  }

  .select {
    display: flex;
    align-items: center;
    border-radius: 3px;
  }

  .select select {
    flex: 1;
    min-width: 0;
  }

  .settings-rows .select {
    padding: 0 2px 0 6px;
    background: #252b34;
  }

  .feature {
    width: 141px;
  }

  .type {
    width: 181px;
  }

  .settings-rows .type {
    gap: 4px;
  }

  .int {
    color: #5abbef;
    font-size: 10px;
    font-weight: 900;
  }

  .action {
    gap: 4px;
    padding: 0 6px;
    color: #7b7f86;
  }

  .split {
    display: grid;
    grid-template-columns: 194px minmax(0, 1fr);
    flex: 1;
    min-height: 0;
  }

  .categories {
    display: flex;
    min-height: 0;
    margin: 4px 0 4px 4px;
    padding: 0 3px 0 4px;
    overflow: hidden;
    border-radius: 3px;
    background: #21252e;
  }

  .category-list {
    flex: 1;
    min-width: 0;
    margin-top: -11px;
    margin-right: 4px;
  }

  .category-list b {
    font-weight: 700;
  }

  .scroll {
    flex: none;
    width: 6px;
    margin: 4px 0;
    background: linear-gradient(#2d323b, #2d323b) 50% 0 / 4px 100% no-repeat;
  }

  .scroll span {
    display: block;
    border-radius: 3px;
    background: #74777c;
  }

  .tree-scroll span {
    height: 106px;
    margin-top: 133px;
  }

  .properties {
    display: flex;
    gap: 3px;
    min-height: 0;
    padding: 2px;
    border: 2px solid #70bafa;
    border-radius: 2px;
    background: #21252e;
  }

  .property-list {
    flex: 1;
    min-width: 0;
    overflow: hidden;
    padding: 4px 0 0 4px;
  }

  .prop-scroll {
    margin: 8px 7px 8px 0;
  }

  .prop-scroll span {
    height: 445px;
  }

  h3 {
    height: 24px;
    margin: 0;
    padding: 0 2px;
    background: #282c35;
    font-size: 14px;
    font-weight: 700;
    line-height: 22px;
  }

  .props {
    display: grid;
    gap: 4px;
    padding-left: 12px;
  }

  .prop {
    display: grid;
    grid-template-columns: 1fr 1fr;
    height: 30px;
  }

  .name {
    display: flex;
    align-items: center;
    justify-content: space-between;
    padding: 0 9px 2px 8px;
    color: #9da0a4;
  }

  .changed .name {
    background: #374e65;
  }

  .revert {
    color: #e0e0e0;
  }

  .value {
    min-width: 0;
    border-radius: 3px;
    background: #1d2128;
  }

  .value.select {
    padding: 0 2px 0 6px;
  }

  .changed .value.select {
    padding: 0 0 0 4px;
    border: 2px solid #70bafa;
  }

  .check {
    display: flex;
    align-items: center;
    gap: 9px;
    padding-left: 7px;
  }

  .check input {
    appearance: none;
    width: 14px;
    height: 14px;
    border-radius: 2px;
    background: #44474f;
  }

  .check input:checked {
    background: #70bafa;
  }

  .check input:checked::before {
    content: "";
    display: block;
    box-sizing: border-box;
    width: 10px;
    height: 6px;
    margin: 3px 2px;
    border: solid #fff;
    border-width: 0 0 2px 2px;
    transform: rotate(-48deg);
  }

  .check input:checked + span {
    color: #66a7e0;
  }

  .spin {
    display: flex;
    align-items: center;
    padding: 0 6px 0 16px;
  }

  .spin input {
    flex: 1;
    min-width: 0;
  }

  .slider {
    display: grid;
    padding: 0 10px 0 6px;
  }

  .slider input {
    grid-area: 1 / 1;
    width: 100%;
  }

  .slider input[type="text"] {
    padding: 0 10px 3px;
  }

  .slider input[type="range"] {
    appearance: none;
    align-self: end;
    height: 4px;
    margin-bottom: 3px;
    background: linear-gradient(90deg, #86888c 50%, #3d4047 50%) 0 50% / 100% 2px no-repeat;
  }

  .slider input[type="range"]::-webkit-slider-thumb {
    appearance: none;
    width: 4px;
    height: 4px;
    background: #cdcfd2;
  }

  .close {
    justify-content: center;
    flex: none;
    align-self: center;
    width: 105px;
    height: 34px;
    margin-top: 8px;
    border-radius: 3px;
    background: #252b34;
  }
</style>
